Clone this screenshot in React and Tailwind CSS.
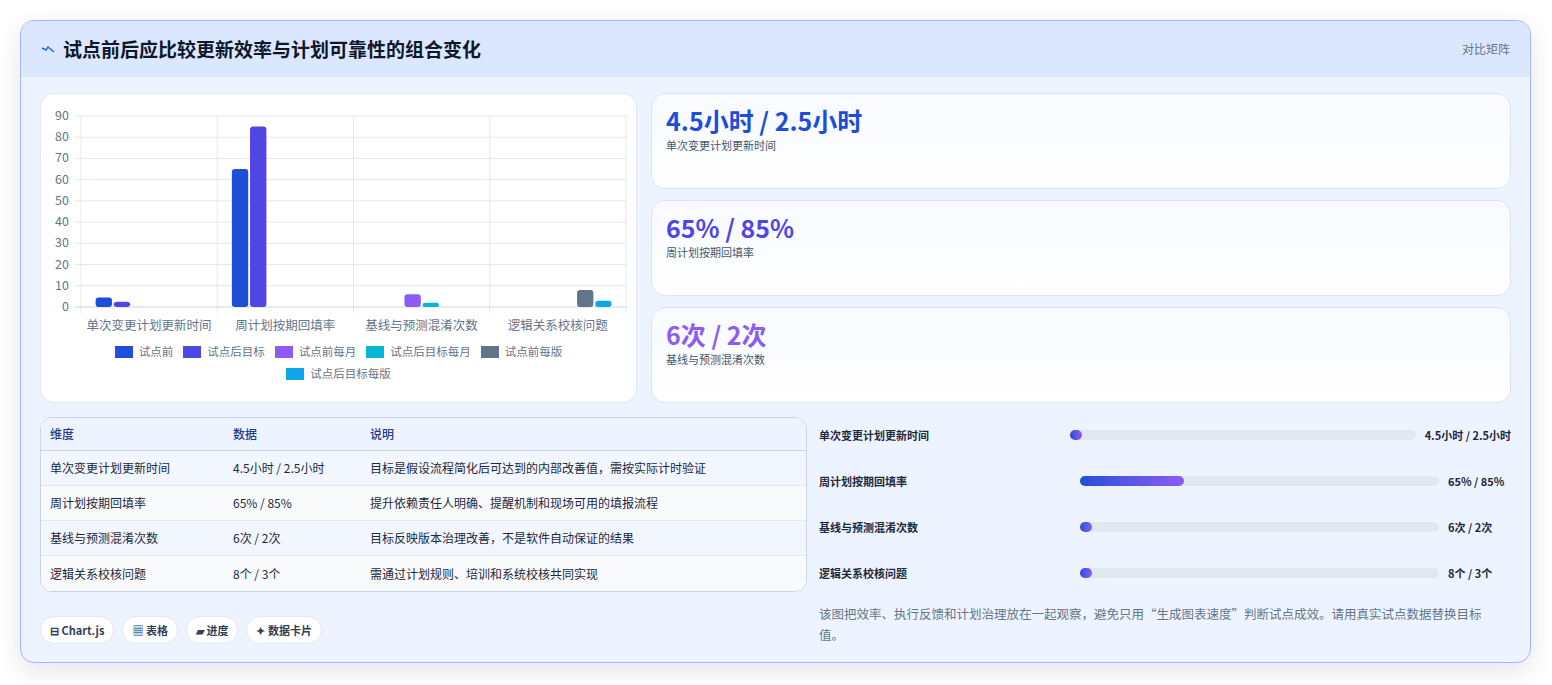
import React from "react";

const F = { fontFamily: '"Noto Sans CJK SC", "Noto Sans", sans-serif' };

const cats = ["单次变更计划更新时间", "周计划按期回填率", "基线与预测混淆次数", "逻辑关系校核问题"];
const colors = ["#1d4ed8", "#4f46e5", "#8b5cf6", "#06b6d4", "#64748b", "#0ea5e9"];
const legend = ["试点前", "试点后目标", "试点前每月", "试点后目标每月", "试点前每版", "试点后目标每版"];
const bars = [
  [0, 0, 4.5], [0, 1, 2.5], [1, 0, 65], [1, 1, 85], [2, 2, 6], [2, 3, 2], [3, 4, 8], [3, 5, 3],
];

function Chart() {
  const x0 = 40, x1 = 585, y0 = 213, y90 = 22;
  const cw = (x1 - x0) / 4;
  const sy = (v) => y0 - (v / 90) * (y0 - y90);
  return (
    <svg width="597" height="248" className="block">
      {Array.from({ length: 10 }).map((_, i) => (
        <g key={i}>
          <line x1={x0 - 6} x2={x1} y1={sy(i * 10)} y2={sy(i * 10)} stroke={i === 0 ? "#cbd5e1" : "#e2e8f0"} />
          <text x={x0 - 12} y={sy(i * 10) + 4} textAnchor="end" fontSize="12.5" fill="#64748b" style={F}>{i * 10}</text>
        </g>
      ))}
      {[0, 1, 2, 3, 4].map((i) => (
        <line key={i} x1={x0 + i * cw} x2={x0 + i * cw} y1={y90} y2={y0 + 6} stroke="#e2e8f0" />
      ))}
      {bars.map(([c, d, v], i) => {
        const bx = x0 + c * cw + cw * 0.1 + d * (cw * 0.8 / 6) + 1;
        const bw = cw * 0.8 / 6 * 0.9;
        return <rect key={i} x={bx} y={sy(v)} width={bw} height={y0 - sy(v)} rx="3" fill={colors[d]} />;
      })}
      {cats.map((c, i) => (
        <text key={c} x={x0 + i * cw + cw / 2} y={236} textAnchor="middle" fontSize="12.5" fill="#64748b" style={F}>{c}</text>
      ))}
    </svg>
  );
}

const stats = [
  ["4.5小时 / 2.5小时", "单次变更计划更新时间", "text-[#1d4ed8]"],
  ["65% / 85%", "周计划按期回填率", "text-[#4f46e5]"],
  ["6次 / 2次", "基线与预测混淆次数", "text-[#8b5cf6]"],
];

const rows = [
  ["单次变更计划更新时间", "4.5小时 / 2.5小时", "目标是假设流程简化后可达到的内部改善值，需按实际计时验证"],
  ["周计划按期回填率", "65% / 85%", "提升依赖责任人明确、提醒机制和现场可用的填报流程"],
  ["基线与预测混淆次数", "6次 / 2次", "目标反映版本治理改善，不是软件自动保证的结果"],
  ["逻辑关系校核问题", "8个 / 3个", "需通过计划规则、培训和系统校核共同实现"],
];

const prog = [
  ["单次变更计划更新时间", 3, "4.5小时 / 2.5小时"],
  ["周计划按期回填率", 29, "65% / 85%"],
  ["基线与预测混淆次数", 3, "6次 / 2次"],
  ["逻辑关系校核问题", 3, "8个 / 3个"],
];

export default function App() {
  return (
    <div className="w-[1552px] h-[685px] bg-white pt-[20px] pl-[20px]" style={F}>
      <div className="w-[1511px] h-[643px] rounded-[14px] border border-[#a5b4fc] bg-[#eef4ff] overflow-hidden shadow-[0_8px_24px_rgba(30,41,59,0.12)]">
        <div className="h-[56px] bg-[#dbe7fe] flex items-center justify-between pl-[20px] pr-[20px]">
          <div className="flex items-center gap-[8px]">
            <svg width="14" height="10" viewBox="0 0 14 10"><path d="M1 4 L5 6 L7 3 L13 8" stroke="#2563eb" strokeWidth="1.4" fill="none" /></svg>
            <h1 className="text-[19px] font-bold text-[#0f172a]">试点前后应比较更新效率与计划可靠性的组合变化</h1>
          </div>
          <span className="text-[12px] text-[#64748b]">对比矩阵</span>
        </div>
        <div className="px-[19px] pt-[16px]">
          <div className="flex gap-[14px]">
            <div className="w-[597px] h-[310px] rounded-[14px] bg-white border border-[#e2e8f0]">
              <Chart />
              <div className="flex flex-wrap justify-center gap-x-[10px] gap-y-[2px] px-[60px] text-[11.5px] text-[#64748b]">
                {legend.map((l, i) => (
                  <div key={l} className="flex items-center gap-[6px] h-[20px]">
                    <span className="w-[18px] h-[12px]" style={{ background: colors[i] }} />
                    {l}
                  </div>
                ))}
              </div>
            </div>
            <div className="flex-1 flex flex-col gap-[11px]">
              {stats.map(([v, l, c]) => (
                <div key={l} className="h-[96px] rounded-[14px] bg-gradient-to-b from-[#f8faff] to-white border border-[#dbe4f5] px-[14px] pt-[9px]">
                  <div className={`text-[25px] font-bold leading-[34px] ${c}`}>{v}</div>
                  <div className="text-[11px] text-[#475569]">{l}</div>
                </div>
              ))}
            </div>
          </div>
          <div className="flex gap-[12px] mt-[14px]">
            <div className="w-[767px]">
              <div className="rounded-[12px] border border-[#cbd5e1] overflow-hidden bg-white text-[12px] text-[#1e293b]">
                <div className="flex h-[33px] items-center bg-[#eef4ff] text-[#1e3a8a] font-medium border-b border-[#cbd5e1]">
                  <div className="w-[192px] pl-[9px]">维度</div>
                  <div className="w-[137px]">数据</div>
                  <div>说明</div>
                </div>
                {rows.map((r, i) => (
                  <div key={i} className={`flex h-[35px] items-center ${i % 2 ? "bg-[#f8fafc]" : "bg-[#f1f6ff]"} ${i < 3 ? "border-b border-[#e2e8f0]" : ""}`}>
                    <div className="w-[192px] pl-[9px]">{r[0]}</div>
                    <div className="w-[137px]">{r[1]}</div>
                    <div>{r[2]}</div>
                  </div>
                ))}
              </div>
              <div className="flex gap-[8px] mt-[24px] text-[11px] font-semibold text-[#334155]">
                {["⊟ Chart.js", "▦ 表格", "▰ 进度", "✦ 数据卡片"].map((t) => (
                  <span key={t} className="h-[28px] px-[9px] flex items-center rounded-full bg-white border border-[#e2e8f0]">{t}</span>
                ))}
              </div>
            </div>
            <div className="flex-1">
              <div className="flex flex-col gap-[26px] pt-[8px]">
                {prog.map(([l, p, v]) => (
                  <div key={l} className="flex items-center gap-[9px] h-[20px] text-[11px] font-semibold text-[#1e293b]">
                    <div className="flex-[7] basis-0">{l}</div>
                    <div className="flex-[10] basis-0 h-[10px] rounded-full bg-[#e2e8f0]">
                      <div className="h-full rounded-full bg-gradient-to-r from-[#1d4ed8] to-[#8b5cf6] min-w-[12px]" style={{ width: p + "%" }} />
                    </div>
                    <div className="whitespace-nowrap min-w-[63px]">{v}</div>
                  </div>
                ))}
              </div>
              <p className="mt-[20px] text-[12.5px] leading-[21px] text-[#64748b] pr-[14px]">
                该图把效率、执行反馈和计划治理放在一起观察，避免只用“生成图表速度”判断试点成效。请用真实试点数据替换目标值。
              </p>
            </div>
          </div>
        </div>
      </div>
    </div>
  );
}
